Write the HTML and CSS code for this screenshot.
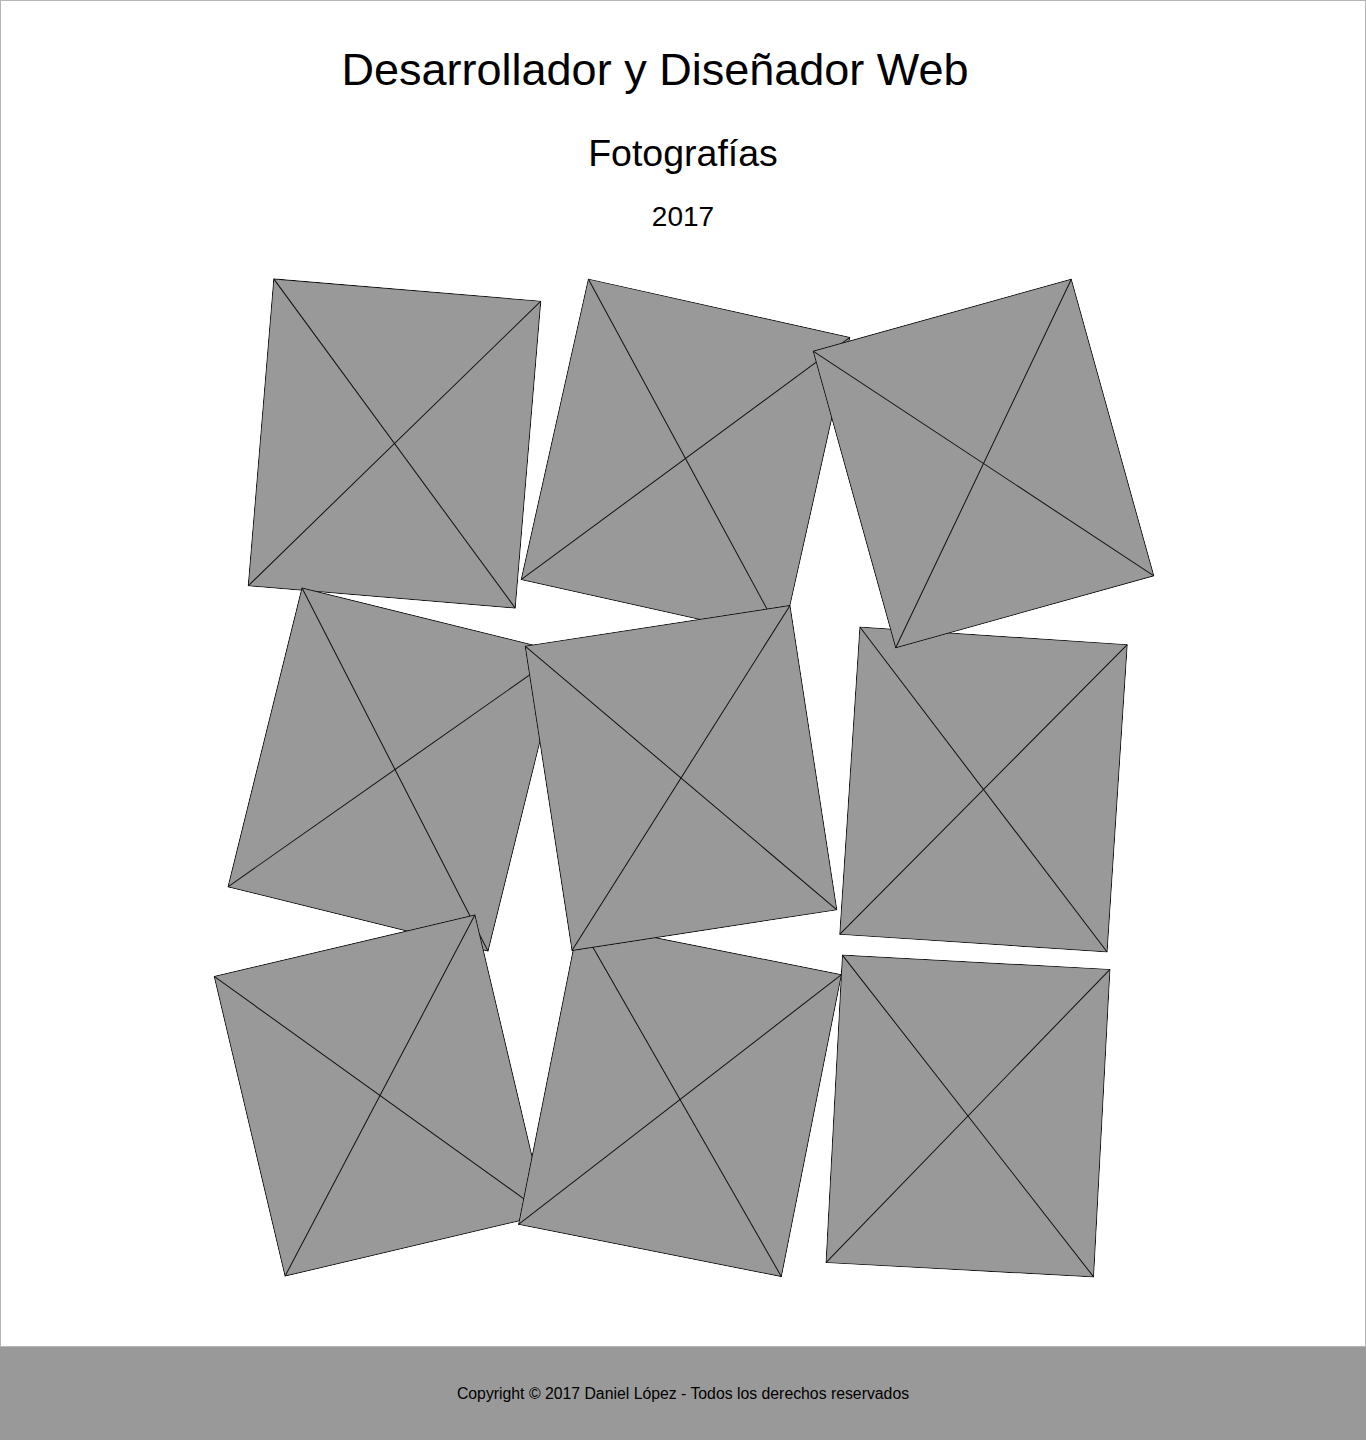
FILE: index.html
```html
<!DOCTYPE html>
<html lang="es">
<head>
<meta charset="utf-8">
<title>Fotografías - Daniel López</title>
<link rel="stylesheet" href="styles.css">
</head>
<body>
<div class="page">
  <header class="header">
    <h1 class="title">Desarrollador y Diseñador Web</h1>
    <h2 class="subtitle">Fotografías</h2>
    <p class="year">2017</p>
  </header>
  <main class="gallery">
    <figure class="photo photo-1"><svg class="ph" viewBox="0 0 269 309" width="269" height="309"><rect class="ph-box" x="0.5" y="0.5" width="268" height="308"/><line class="ph-line" x1="0.5" y1="0.5" x2="268.5" y2="308.5"/><line class="ph-line" x1="268.5" y1="0.5" x2="0.5" y2="308.5"/></svg></figure>
    <figure class="photo photo-2"><svg class="ph" viewBox="0 0 269 309" width="269" height="309"><rect class="ph-box" x="0.5" y="0.5" width="268" height="308"/><line class="ph-line" x1="0.5" y1="0.5" x2="268.5" y2="308.5"/><line class="ph-line" x1="268.5" y1="0.5" x2="0.5" y2="308.5"/></svg></figure>
    <figure class="photo photo-3"><svg class="ph" viewBox="0 0 269 309" width="269" height="309"><rect class="ph-box" x="0.5" y="0.5" width="268" height="308"/><line class="ph-line" x1="0.5" y1="0.5" x2="268.5" y2="308.5"/><line class="ph-line" x1="268.5" y1="0.5" x2="0.5" y2="308.5"/></svg></figure>
    <figure class="photo photo-4"><svg class="ph" viewBox="0 0 269 309" width="269" height="309"><rect class="ph-box" x="0.5" y="0.5" width="268" height="308"/><line class="ph-line" x1="0.5" y1="0.5" x2="268.5" y2="308.5"/><line class="ph-line" x1="268.5" y1="0.5" x2="0.5" y2="308.5"/></svg></figure>
    <figure class="photo photo-5"><svg class="ph" viewBox="0 0 269 309" width="269" height="309"><rect class="ph-box" x="0.5" y="0.5" width="268" height="308"/><line class="ph-line" x1="0.5" y1="0.5" x2="268.5" y2="308.5"/><line class="ph-line" x1="268.5" y1="0.5" x2="0.5" y2="308.5"/></svg></figure>
    <figure class="photo photo-6"><svg class="ph" viewBox="0 0 269 309" width="269" height="309"><rect class="ph-box" x="0.5" y="0.5" width="268" height="308"/><line class="ph-line" x1="0.5" y1="0.5" x2="268.5" y2="308.5"/><line class="ph-line" x1="268.5" y1="0.5" x2="0.5" y2="308.5"/></svg></figure>
    <figure class="photo photo-7"><svg class="ph" viewBox="0 0 269 309" width="269" height="309"><rect class="ph-box" x="0.5" y="0.5" width="268" height="308"/><line class="ph-line" x1="0.5" y1="0.5" x2="268.5" y2="308.5"/><line class="ph-line" x1="268.5" y1="0.5" x2="0.5" y2="308.5"/></svg></figure>
    <figure class="photo photo-8"><svg class="ph" viewBox="0 0 269 309" width="269" height="309"><rect class="ph-box" x="0.5" y="0.5" width="268" height="308"/><line class="ph-line" x1="0.5" y1="0.5" x2="268.5" y2="308.5"/><line class="ph-line" x1="268.5" y1="0.5" x2="0.5" y2="308.5"/></svg></figure>
    <figure class="photo photo-9"><svg class="ph" viewBox="0 0 269 309" width="269" height="309"><rect class="ph-box" x="0.5" y="0.5" width="268" height="308"/><line class="ph-line" x1="0.5" y1="0.5" x2="268.5" y2="308.5"/><line class="ph-line" x1="268.5" y1="0.5" x2="0.5" y2="308.5"/></svg></figure>
  </main>
</div>
<footer class="footer">
  <p class="copy">Copyright © 2017 Daniel López - Todos los derechos reservados</p>
</footer>
</body>
</html>
```

FILE: styles.css
```css
html, body {
  margin: 0;
  padding: 0;
  background: #fff;
}

body {
  font-family: "Liberation Sans", Arial, sans-serif;
  color: #000;
}

.page {
  border: 1px solid #b5b5b5;
  padding-bottom: 78px;
}

.header {
  text-align: center;
}

.title {
  margin: 42px 0 0;
  padding-right: 56px;
  font-size: 45px;
  line-height: 54px;
  font-weight: normal;
}

.subtitle {
  margin: 33px 0 0;
  font-size: 37.5px;
  line-height: 46px;
  font-weight: normal;
}

.year {
  margin: 24px 0 0;
  font-size: 28px;
  line-height: 34px;
}

.gallery {
  margin-top: 56px;
  display: grid;
  grid-template-columns: repeat(3, 295px);
  grid-auto-rows: 326px;
  justify-content: center;
  justify-items: center;
  align-items: center;
}

.photo {
  margin: 0;
  width: 269px;
  height: 309px;
}

.ph {
  display: block;
}

.ph-box {
  fill: #999;
  stroke: #111;
  stroke-width: 1;
}

.ph-line {
  stroke: #111;
  stroke-width: 1;
}

.photo-1 { transform: translate(6px, -10px) rotate(4.76deg); }
.photo-2 { transform: translate(2px, 5px) rotate(12.6deg); }
.photo-3 { transform: translate(5px, 10px) rotate(-15.55deg); z-index: 1; }
.photo-4 { transform: translate(6.5px, -10px) rotate(13.9deg); }
.photo-5 { transform: translate(-2.5px, -1.5px) rotate(-8.75deg); z-index: 1; }
.photo-6 { transform: translate(5px, 10px) rotate(3.75deg); }
.photo-7 { transform: translate(-8.5px, -10px) rotate(-13.3deg); }
.photo-8 { transform: translate(-3.5px, -6px) rotate(11.25deg); }
.photo-9 { transform: translate(-10.5px, 10.5px) rotate(3.05deg); }

.footer {
  height: 93px;
  background: #999;
  display: flex;
  align-items: center;
  justify-content: center;
}

.copy {
  margin: 0;
  font-size: 15.8px;
  line-height: 20px;
}
```
